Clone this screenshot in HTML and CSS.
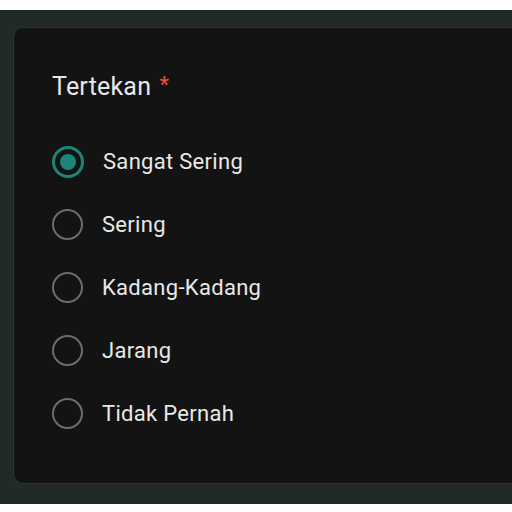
FILE: index.html
```html
<!DOCTYPE html>
<html lang="id">
<head>
<meta charset="utf-8">
<title>Tertekan</title>
<link rel="stylesheet" href="styles.css">
</head>
<body>
<div class="band">
  <section class="card">
    <h2 class="title">Tertekan <span class="req">*</span></h2>
    <div class="options">
      <label class="option"><span class="radio checked"></span><span class="label">Sangat Sering</span></label>
      <label class="option"><span class="radio"></span><span class="label">Sering</span></label>
      <label class="option"><span class="radio"></span><span class="label">Kadang-Kadang</span></label>
      <label class="option"><span class="radio"></span><span class="label">Jarang</span></label>
      <label class="option"><span class="radio"></span><span class="label">Tidak Pernah</span></label>
    </div>
  </section>
</div>
</body>
</html>
```
FILE: styles.css
```css
html, body {
  margin: 0;
  padding: 0;
  background: #ffffff;
}
body {
  font-family: Roboto, "Liberation Sans", sans-serif;
  padding-top: 10px;
}
.band {
  height: 494px;
  box-sizing: border-box;
  background: #212a29;
  padding: 17px 0 0 13px;
  overflow: hidden;
}
.card {
  width: 560px;
  height: 457px;
  box-sizing: border-box;
  background: #131313;
  border: 1px solid #2e3534;
  border-radius: 10px;
  padding: 42px 0 0 38px;
}
.title {
  margin: 0;
  font-size: 25px;
  line-height: 30px;
  font-weight: 400;
  color: #e8e8e8;
  letter-spacing: 0.2px;
}
.req {
  color: #e5533f;
  font-size: 22px;
  vertical-align: 3px;
  margin-left: 2px;
}
.options {
  display: flex;
  flex-direction: column;
  margin-top: 28px;
}
.option {
  display: flex;
  align-items: center;
  height: 63px;
  gap: 19px;
}
.radio {
  width: 31px;
  height: 31px;
  box-sizing: border-box;
  border: 2.5px solid #6d6d6d;
  border-radius: 50%;
  display: flex;
  align-items: center;
  justify-content: center;
  flex: none;
}
.radio.checked {
  width: 32px;
  height: 32px;
  border: 3px solid #1b8678;
}
.radio.checked::after {
  content: "";
  width: 16px;
  height: 16px;
  border-radius: 50%;
  background: #1b8678;
}
.label {
  font-size: 22px;
  color: #e8e8e8;
  letter-spacing: 0.3px;
}
```
